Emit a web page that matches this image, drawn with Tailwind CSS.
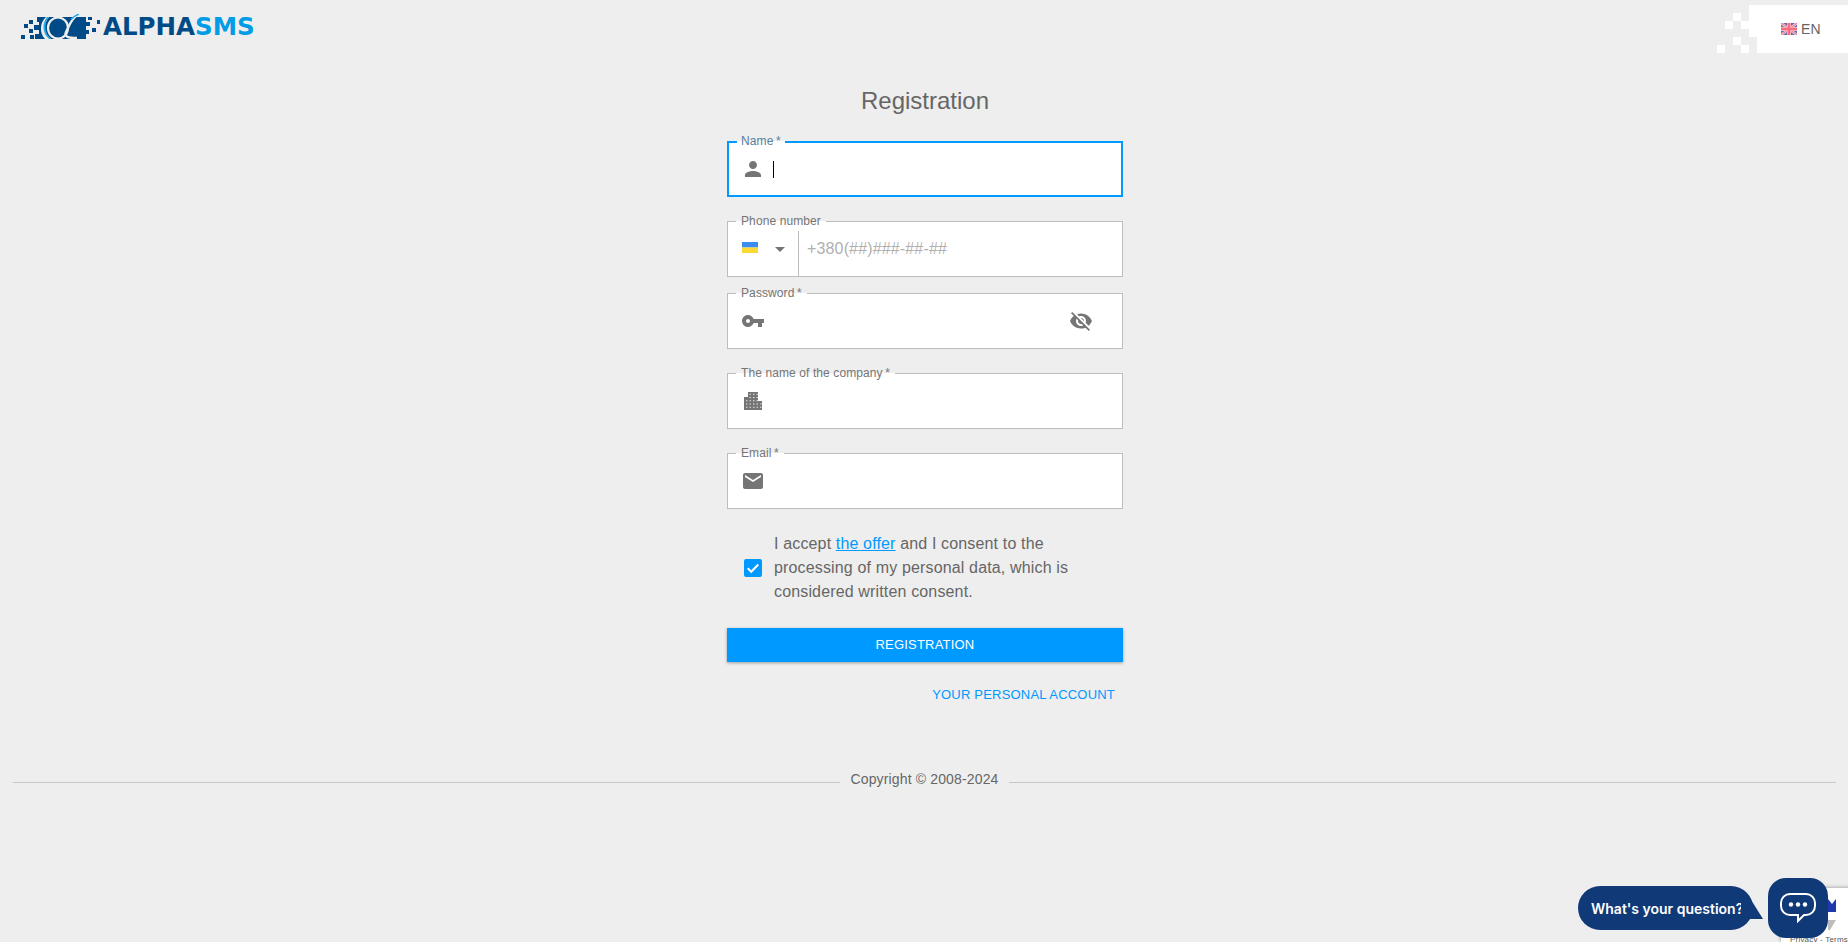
<!DOCTYPE html>
<html lang="en">
<head>
  <meta charset="UTF-8" />
  <title>AlphaSMS Registration</title>
  <script src="https://cdn.jsdelivr.net/npm/@tailwindcss/browser@4"></script>
</head>
<body class="relative h-[942px] overflow-hidden bg-[#eeeeee] font-['Liberation_Sans',sans-serif] text-[#666666]">

  <!-- header -->
  <header class="flex h-[53px] items-start justify-between">
    <div class="flex items-center pl-[20px] pt-[12px]">
      <svg width="82" height="26" viewBox="0 0 82 26">
        <g fill="#004b87">
          <rect x="1" y="21" width="4" height="4"/>
          <rect x="4" y="10" width="4" height="4"/>
          <rect x="9" y="6" width="4" height="4"/>
          <rect x="9" y="15" width="4" height="4"/>
          <path d="M17 3H66V8H70V12H66V16H69V20H66V25H15V20H19V16H14V11H19V8H17z"/>
          <rect x="68" y="3" width="4" height="3"/>
          <rect x="77" y="6" width="3" height="4"/>
          <rect x="72" y="14" width="4" height="4"/>
          <rect x="10" y="21" width="4" height="4"/>
        </g>
        <ellipse cx="38" cy="14" rx="10" ry="10.5" fill="none" stroke="#eeeeee" stroke-width="2.2"/>
        <path d="M29 3C23 9 23 19 31 25H25C19 19 20 8 26 3z" fill="#eeeeee"/>
        <path d="M29 3C24 9 24 19 31 25H29C22 19 22 9 27 3z" fill="#29a9e6"/>
        <path d="M59 0C52 3 49 12 46 18C44 23 48 24 57 24" fill="none" stroke="#eeeeee" stroke-width="2.4"/>
        <path d="M59 0C55 1.500 53 3 51 5.500" fill="none" stroke="#29a9e6" stroke-width="1.400"/>
      </svg>
      <span class="ml-[1px] font-['DejaVu_Sans',sans-serif] text-[24.500px] leading-[30px] font-bold text-[#004b87]">ALPHA<span class="text-[#009de6]">SMS</span></span>
    </div>
    <div class="mt-[5px] flex h-[48px]">
      <svg width="40" height="48" viewBox="0 0 40 48" class="block">
        <g fill="#ffffff">
          <rect x="32" y="0" width="8" height="16"/>
          <rect x="16" y="8" width="8" height="8"/>
          <rect x="8" y="16" width="8" height="8"/>
          <rect x="24" y="16" width="16" height="8"/>
          <rect x="32" y="24" width="8" height="8"/>
          <rect x="16" y="32" width="8" height="8"/>
          <rect x="0" y="40" width="8" height="8"/>
          <rect x="24" y="40" width="8" height="8"/>
        </g>
      </svg>
      <div class="flex h-[48px] w-[91px] items-center bg-white pl-[24px] text-[14px] tracking-[0.15px]">
        <svg width="16" height="12" viewBox="0 0 16 12" class="mr-[4px]">
          <rect width="16" height="12" fill="#5b6cb0"/>
          <path d="M0 0l16 12M16 0L0 12" stroke="#f6c3cb" stroke-width="2.600"/>
          <path d="M0 0l16 12M16 0L0 12" stroke="#f0768a" stroke-width="1"/>
          <path d="M8 0v12M0 6h16" stroke="#f6c3cb" stroke-width="4"/>
          <path d="M8 0v12M0 6h16" stroke="#f9697f" stroke-width="2.600"/>
        </svg>
        EN
      </div>
    </div>
  </header>

  <main class="ml-[727px] w-[396px]">
    <h1 class="mt-[33px] h-[30px] text-center text-[24px] leading-[30px]">Registration</h1>

    <!-- name -->
    <div class="relative mt-[25px] flex h-[56px] items-center border-2 border-[#0099ff] bg-white pl-[12px]">
      <span class="absolute top-[-12px] left-[8px] bg-gradient-to-b from-[#eeeeee] from-50% to-white to-50% px-[4px] text-[12px] leading-[20px] tracking-[0.1px] text-[#55809f]">Name&thinsp;*</span>
      <svg width="24" height="24" viewBox="0 0 24 24" fill="#757575"><path d="M12 12c2.210 0 4-1.790 4-4s-1.790-4-4-4-4 1.790-4 4 1.790 4 4 4zm0 2c-2.670 0-8 1.340-8 4v2h16v-2c0-2.660-5.330-4-8-4z"/></svg>
      <span class="ml-[8px] h-[17px] w-px bg-black"></span>
    </div>

    <!-- phone -->
    <div class="relative mt-[24px] flex h-[56px] border border-[#bdbdbd] bg-white">
      <span class="absolute top-[-11px] left-[8px] bg-gradient-to-b from-[#eeeeee] from-50% to-white to-50% px-[5px] text-[12px] leading-[20px] tracking-[0.1px] text-[#757575]">Phone number</span>
      <div class="flex w-[71px] items-center border-r border-[#bdbdbd] pl-[14px]">
        <svg width="16" height="11" viewBox="0 0 16 11" class="mb-[4px]"><rect width="16" height="5.500" fill="#3b8df2"/><rect y="5.500" width="16" height="5.500" fill="#fdd835"/></svg>
        <svg width="10" height="5" viewBox="0 0 10 5" class="ml-[17px]" fill="#757575"><path d="M0 0h10L5 5z"/></svg>
      </div>
      <div class="flex items-center pl-[8px] text-[16px] tracking-[0.15px] text-[#b0b0b0]">+380(##)###-##-##</div>
    </div>

    <!-- password -->
    <div class="relative mt-[16px] flex h-[56px] items-center justify-between border border-[#bdbdbd] bg-white pr-[29px] pl-[13px]">
      <span class="absolute top-[-11px] left-[8px] bg-gradient-to-b from-[#eeeeee] from-50% to-white to-50% px-[5px] text-[12px] leading-[20px] tracking-[0.1px] text-[#757575]">Password&thinsp;*</span>
      <svg width="24" height="24" viewBox="0 0 24 24" fill="#757575"><path d="M12.650 10C11.830 7.670 9.610 6 7 6c-3.310 0-6 2.690-6 6s2.690 6 6 6c2.610 0 4.830-1.670 5.650-4H17v4h4v-4h2v-4H12.650zM7 14c-1.100 0-2-.9-2-2s.9-2 2-2 2 .9 2 2-.9 2-2 2z"/></svg>
      <svg width="24" height="24" viewBox="0 0 24 24" fill="#757575"><path d="M12 7c2.760 0 5 2.240 5 5 0 .65-.13 1.260-.36 1.830l2.920 2.920c1.510-1.260 2.700-2.890 3.430-4.750-1.730-4.390-6-7.500-11-7.500-1.400 0-2.740.25-3.980.7l2.160 2.160C10.740 7.130 11.350 7 12 7zM2 4.270l2.280 2.280.46.46C3.080 8.300 1.780 10.020 1 12c1.730 4.390 6 7.500 11 7.500 1.550 0 3.030-.3 4.380-.84l.42.42L19.730 22 21 20.730 3.270 3 2 4.270zM7.530 9.800l1.550 1.550c-.05.21-.08.43-.08.65 0 1.660 1.340 3 3 3 .22 0 .44-.03.65-.08l1.550 1.550c-.67.33-1.410.53-2.200.53-2.760 0-5-2.240-5-5 0-.79.2-1.530.53-2.200zm4.310-.78l3.150 3.150.02-.16c0-1.660-1.340-3-3-3l-.17.01z"/></svg>
    </div>

    <!-- company -->
    <div class="relative mt-[24px] flex h-[56px] items-center border border-[#bdbdbd] bg-white pl-[16px]">
      <span class="absolute top-[-11px] left-[8px] bg-gradient-to-b from-[#eeeeee] from-50% to-white to-50% px-[5px] text-[12px] leading-[20px] tracking-[0.1px] text-[#757575]">The name of the company&thinsp;*</span>
      <svg width="18" height="18" viewBox="0 0 18 18">
        <path d="M4 0H14V9H18V18H0V5H4z" fill="#757575"/>
        <path d="M5.500 2.250H14M5.500 5.500H14M2 8.750H14M2 12H18M2 15.250H18" fill="none" stroke="#ffffff" stroke-opacity="0.8" stroke-width="1.200" stroke-dasharray="1.500 2"/>
      </svg>
    </div>

    <!-- email -->
    <div class="relative mt-[24px] flex h-[56px] items-center border border-[#bdbdbd] bg-white pl-[13px]">
      <span class="absolute top-[-11px] left-[8px] bg-gradient-to-b from-[#eeeeee] from-50% to-white to-50% px-[5px] text-[12px] leading-[20px] tracking-[0.1px] text-[#757575]">Email&thinsp;*</span>
      <svg width="24" height="24" viewBox="0 0 24 24" fill="#757575"><path d="M20 4H4c-1.100 0-1.990.9-1.990 2L2 18c0 1.100.9 2 2 2h16c1.100 0 2-.9 2-2V6c0-1.100-.9-2-2-2zm0 4l-8 5-8-5V6l8 5 8-5v2z"/></svg>
    </div>

    <!-- offer -->
    <div class="mt-[23px] flex items-center pl-[17px]">
      <span class="flex h-[18px] w-[18px] items-center justify-center rounded-[2px] bg-[#0099ff]">
        <svg width="14" height="14" viewBox="0 0 24 24" fill="none" stroke="#ffffff" stroke-width="3.400"><path d="M3 12.500l6 6L21 6"/></svg>
      </span>
      <p class="ml-[12px] w-[320px] text-[16px] leading-[24px] tracking-[0.15px]">I accept <a href="#" class="text-[#0099ff] underline">the offer</a> and I consent to the processing of my personal data, which is considered written consent.</p>
    </div>

    <button class="mt-[24px] block h-[34px] w-full bg-[#0099ff] text-[13px] tracking-[0.2px] text-white shadow-[0_1px_3px_rgba(0,0,0,0.35)]">REGISTRATION</button>
    <div class="mt-[24px] pr-[8px] text-right text-[13px] leading-[18px] tracking-[0.2px] text-[#0099ff]">YOUR PERSONAL ACCOUNT</div>
  </main>

  <!-- footer -->
  <footer class="mt-[65px] flex items-center pr-[12px] pl-[13px] text-[14px] leading-[20px] tracking-[0.15px]">
    <span class="mt-[6px] h-px flex-1 bg-[#c8c8c8]"></span>
    <span class="px-[10px]">Copyright © 2008-2024</span>
    <span class="mt-[6px] h-px flex-1 bg-[#c8c8c8]"></span>
  </footer>

  <!-- recaptcha badge behind the chat button -->
  <div class="absolute top-[888px] left-[1781px] h-[54px] w-[70px] bg-white shadow-[0_0_4px_rgba(0,0,0,0.4)]">
    <svg width="24" height="36" viewBox="0 0 24 36" class="absolute top-[9px] left-[31px]"><path d="M16 2L20 7L24 2V15H16z" fill="#1c3aa9"/><path d="M16 23H24L18 33H16z" fill="#bdbdbd"/></svg>
    <span class="absolute bottom-[-3px] left-[9px] text-[8px] leading-[10px] tracking-[0.2px] whitespace-nowrap text-[#555555]">Privacy - Terms</span>
  </div>

  <!-- chat widget -->
  <div class="absolute top-[878px] left-[1578px] flex items-start">
    <div class="relative mt-[8px] flex h-[44px] w-[175px] items-center rounded-[22px] bg-[#103a77] pl-[13px] font-['Inter',sans-serif] text-[14px] font-semibold text-white">
      What's your question?
      <svg width="22" height="24" viewBox="0 0 22 24" class="absolute top-[9px] right-[-10px]"><path d="M0 0H7L22 24H0z" fill="#103a77"/></svg>
    </div>
    <div class="ml-[15px] flex h-[60px] w-[60px] items-center justify-center rounded-[18px] bg-[#103a77]">
      <svg width="36" height="30" viewBox="0 0 36 30" fill="none"><path d="M10 1h16c5 0 9 4 9 9v3c0 5-4 9-9 9h-2l-6 6v-6h-8c-5 0-9-4-9-9v-3c0-5 4-9 9-9z" stroke="#ffffff" stroke-width="2"/><circle cx="11" cy="11.500" r="2.200" fill="#ffffff"/><circle cx="18" cy="11.500" r="2.200" fill="#ffffff"/><circle cx="25" cy="11.500" r="2.200" fill="#ffffff"/></svg>
    </div>
  </div>
</body>
</html>
